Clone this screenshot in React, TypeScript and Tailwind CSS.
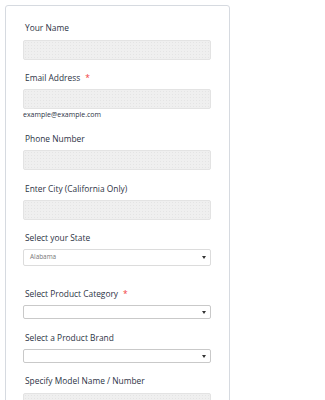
import React from "react";

const font = { fontFamily: '"Open Sans", "Liberation Sans", sans-serif' };

function Label({ text, req }: { text: string; req?: boolean }) {
  return (
    <div className="ml-[2px] h-[12px] text-[8.4px] leading-[12px] text-[#2c3345]">
      {text}
      {req && <span className="ml-[5px] text-[#f23a3c]">*</span>}
    </div>
  );
}

function TextInput() {
  return (
    <div className="h-[20px] w-full rounded-[2px] border border-[#e3e3e3] bg-[#efefef] bg-[radial-gradient(#e4e4e4_0.6px,transparent_0.6px)] bg-[length:3px_3px]" />
  );
}

function Select({ value, h, light }: { value?: string; h: string; light?: boolean }) {
  return (
    <div
      className={
        "flex w-full items-center justify-between rounded-[2px] border bg-white pl-[6px] pr-[4px] " +
        h +
        (light ? " border-[#dcdcdc]" : " border-[#c9c9c9]")
      }
    >
      <span className="text-[6.4px] leading-none text-[#777]">{value ?? ""}</span>
      <svg width="4" height="3" viewBox="0 0 4 3">
        <path d="M0 0 L4 0 L2 3 Z" fill="#333" />
      </svg>
    </div>
  );
}

export default function App() {
  return (
    <div className="h-[400px] w-[325px] overflow-hidden bg-white pl-[5px] pt-[5px]" style={font}>
      <div className="h-[420px] w-[225px] rounded-[3px] border border-[#d6dae0] pl-[17px] pr-[18px] pt-[16px]">
        <Label text="Your Name" />
        <div className="mt-[6px]">
          <TextInput />
        </div>

        <div className="mt-[12px]">
          <Label text="Email Address" req />
        </div>
        <div className="mt-[5px]">
          <TextInput />
        </div>
        <div className="mt-[1px] text-[7px] leading-[10px] text-[#2c3345]">example@example.com</div>

        <div className="mt-[13px]">
          <Label text="Phone Number" />
        </div>
        <div className="mt-[5px]">
          <TextInput />
        </div>

        <div className="mt-[13px]">
          <Label text="Enter City (California Only)" />
        </div>
        <div className="mt-[5px]">
          <TextInput />
        </div>

        <div className="mt-[12px]">
          <Label text="Select your State" />
        </div>
        <div className="mt-[5px]">
          <Select value="Alabama" h="h-[17px]" light />
        </div>

        <div className="mt-[22px]">
          <Label text="Select Product Category" req />
        </div>
        <div className="mt-[5px]">
          <Select h="h-[14px]" />
        </div>

        <div className="mt-[13px]">
          <Label text="Select a Product Brand" />
        </div>
        <div className="mt-[5px]">
          <Select h="h-[14px]" />
        </div>

        <div className="mt-[12px]">
          <Label text="Specify Model Name / Number" />
        </div>
        <div className="mt-[6px]">
          <TextInput />
        </div>
      </div>
    </div>
  );
}
